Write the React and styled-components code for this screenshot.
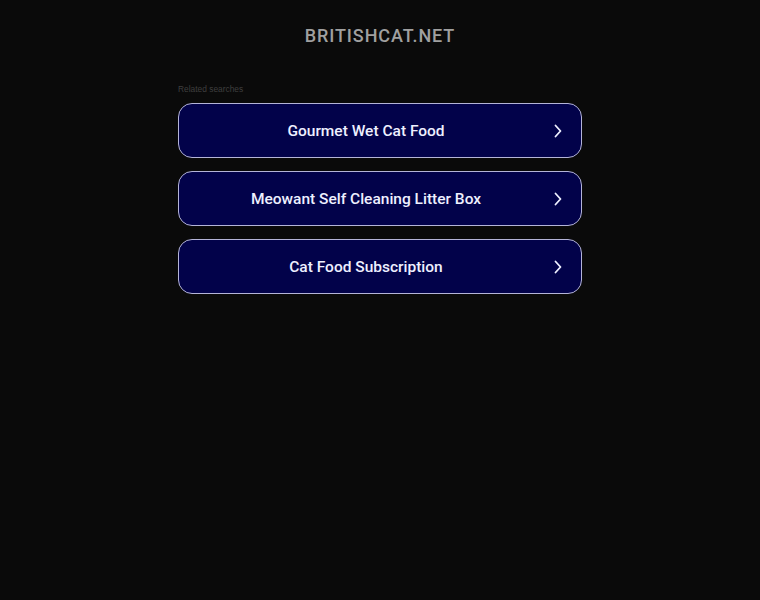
import React from "react";
import styled, { createGlobalStyle } from "styled-components";

const Global = createGlobalStyle`
  html, body {
    margin: 0;
    padding: 0;
    background: #0a0a0a;
  }
  body {
    font-family: "Liberation Sans", Arial, sans-serif;
  }
`;

const Page = styled.div`
  min-height: 600px;
  display: flex;
  flex-direction: column;
  align-items: center;
`;

const Domain = styled.h1`
  margin: 25px 0 0;
  font-family: Roboto, "Liberation Sans", sans-serif;
  font-size: 18px;
  font-weight: 500;
  letter-spacing: 0.9px;
  color: #a0a0a0;
  line-height: 21px;
`;

const Panel = styled.div`
  width: 404px;
  margin-top: 38px;
  display: flex;
  flex-direction: column;
`;

const Heading = styled.div`
  font-size: 8.4px;
  color: #3f3f3f;
  line-height: 10px;
  margin-bottom: 9px;
`;

const List = styled.div`
  display: flex;
  flex-direction: column;
  gap: 13px;
`;

const Item = styled.a`
  box-sizing: border-box;
  height: 55px;
  display: flex;
  align-items: center;
  padding: 0 18px 0 20px;
  background: #02024a;
  border: 1px solid #b4b4d8;
  border-radius: 14px;
  color: #eef0ff;
  text-decoration: none;
  cursor: pointer;
`;

const Label = styled.span`
  flex: 1;
  text-align: center;
  font-family: Roboto, "Liberation Sans", sans-serif;
  font-weight: 500;
  font-size: 15.5px;
`;

const Arrow = styled.span`
  width: 30px;
  display: flex;
  justify-content: flex-end;
`;

const Chevron = () => (
  <svg width="10" height="14" viewBox="0 0 10 14" fill="none">
    <path d="M2.5 1.5 L7.5 7 L2.5 12.5" stroke="#eef0ff" strokeWidth="1.8" strokeLinecap="round" strokeLinejoin="round" />
  </svg>
);

const searches = [
  "Gourmet Wet Cat Food",
  "Meowant Self Cleaning Litter Box",
  "Cat Food Subscription",
];

export default function App() {
  return (
    <Page>
      <Global />
      <Domain>BRITISHCAT.NET</Domain>
      <Panel>
        <Heading>Related searches</Heading>
        <List>
          {searches.map((s) => (
            <Item key={s}>
              <Label>{s}</Label>
              <Arrow>
                <Chevron />
              </Arrow>
            </Item>
          ))}
        </List>
      </Panel>
    </Page>
  );
}
